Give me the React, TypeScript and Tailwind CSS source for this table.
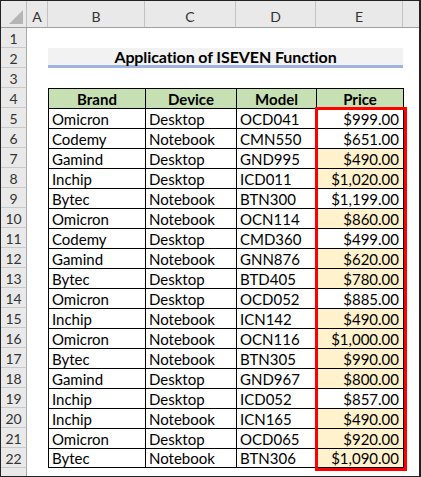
import React from "react";

const rows: [string, string, string, string, boolean][] = [
  ["Omicron", "Desktop", "OCD041", "$999.00", false],
  ["Codemy", "Notebook", "CMN550", "$651.00", false],
  ["Gamind", "Desktop", "GND995", "$490.00", true],
  ["Inchip", "Desktop", "ICD011", "$1,020.00", true],
  ["Bytec", "Notebook", "BTN300", "$1,199.00", false],
  ["Omicron", "Notebook", "OCN114", "$860.00", true],
  ["Codemy", "Desktop", "CMD360", "$499.00", false],
  ["Gamind", "Notebook", "GNN876", "$620.00", true],
  ["Bytec", "Desktop", "BTD405", "$780.00", true],
  ["Omicron", "Desktop", "OCD052", "$885.00", false],
  ["Inchip", "Notebook", "ICN142", "$490.00", true],
  ["Omicron", "Notebook", "OCN116", "$1,000.00", true],
  ["Bytec", "Notebook", "BTN305", "$990.00", true],
  ["Gamind", "Desktop", "GND967", "$800.00", true],
  ["Inchip", "Desktop", "ICD052", "$857.00", false],
  ["Inchip", "Notebook", "ICN165", "$490.00", true],
  ["Omicron", "Desktop", "OCD065", "$920.00", true],
  ["Bytec", "Notebook", "BTN306", "$1,090.00", true],
];

function RowHead({ n, last }: { n?: number; last?: boolean }) {
  return (
    <div
      className={`w-[26px] shrink-0 h-full bg-[#e9e9e9] border-r border-r-[#a8a8a8] ${
        last ? "" : "border-b border-b-[#c9c9c9]"
      } flex items-center justify-center pt-[2px] text-[14px] text-[#333]`}
    >
      {n}
    </div>
  );
}

export default function App() {
  return (
    <div
      className="relative w-[421px] h-[477px] overflow-hidden bg-white border border-[#222] border-r-2 text-black"
      style={{ fontFamily: "Lato, 'Liberation Sans', sans-serif" }}
    >
      {/* column header */}
      <div className="flex h-[27px] bg-[#e9e9e9] border-b border-b-[#9e9e9e] text-[14px] text-[#333]">
        <div className="w-[26px] shrink-0 border-r border-r-[#bdbdbd] relative">
          <svg className="absolute right-[3px] bottom-[3px]" width="14" height="14" viewBox="0 0 14 14">
            <polygon points="14,0 14,14 0,14" fill="#b5b5b5" />
          </svg>
        </div>
        <div className="w-[21px] shrink-0 border-r border-r-[#c3c3c3] flex items-center justify-center pt-[5px]">A</div>
        <div className="w-[97px] shrink-0 border-r border-r-[#c3c3c3] flex items-center justify-center pt-[5px]">B</div>
        <div className="w-[91px] shrink-0 border-r border-r-[#c3c3c3] flex items-center justify-center pt-[5px]">C</div>
        <div className="w-[80px] shrink-0 border-r border-r-[#c3c3c3] flex items-center justify-center pt-[5px]">D</div>
        <div className="w-[87px] shrink-0 border-r border-r-[#c3c3c3] flex items-center justify-center pt-[5px]">E</div>
        <div className="flex-1" />
      </div>

      {/* row 1 */}
      <div className="flex h-[20px]">
        <RowHead n={1} />
      </div>
      {/* row 2 title */}
      <div className="flex h-[20px]">
        <RowHead n={2} />
        <div className="w-[21px] shrink-0" />
        <div className="w-[355px] shrink-0 h-full bg-[#f2f2f2] border-b-[3px] border-b-[#9fb4de] flex items-center justify-center text-[16px] font-bold pt-[1px] tracking-[-0.1px]">
          Application of ISEVEN Function
        </div>
      </div>
      {/* row 3 */}
      <div className="flex h-[20px]">
        <RowHead n={3} />
      </div>
      {/* row 4 header */}
      <div className="flex h-[20px]">
        <RowHead n={4} />
        <div className="w-[21px] shrink-0" />
        {["Brand", "Device", "Model", "Price"].map((h, i) => (
          <div
            key={h}
            className={`${
              ["w-[97px]", "w-[91px]", "w-[80px]", "w-[88px]"][i]
            } shrink-0 h-full bg-[#c6e0b4] border-l border-t border-black ${
              i === 3 ? "border-r" : ""
            } flex items-center justify-center text-[15px] font-bold pt-[1px]`}
          >
            {h}
          </div>
        ))}
      </div>
      {rows.map((r, idx) => {
        const last = idx === rows.length - 1;
        return (
          <div key={idx} className="flex h-[20px]">
            <RowHead n={idx + 5} />
            <div className="w-[21px] shrink-0" />
            <div className={`w-[97px] shrink-0 h-full border-l border-t border-black ${last ? "border-b h-[21px]" : ""} flex items-center pl-[3px] text-[15px] pt-[1px]`}>
              {r[0]}
            </div>
            <div className={`w-[91px] shrink-0 h-full border-l border-t border-black ${last ? "border-b h-[21px]" : ""} flex items-center pl-[3px] text-[15px] pt-[1px]`}>
              {r[1]}
            </div>
            <div className={`w-[80px] shrink-0 h-full border-l border-t border-black ${last ? "border-b h-[21px]" : ""} flex items-center pl-[3px] text-[15px] pt-[1px]`}>
              {r[2]}
            </div>
            <div
              className={`w-[88px] shrink-0 h-full border-l border-t border-r border-black ${last ? "border-b h-[21px]" : ""} ${
                r[4] ? "bg-[#fff2cc]" : "bg-white"
              } flex items-center justify-end pr-[4px] text-[15px] pt-[1px]`}
            >
              {r[3]}
            </div>
          </div>
        );
      })}
      <div className="flex h-[20px]">
        <RowHead last />
      </div>

      {/* red selection outline over E5:E22 */}
      <div className="absolute left-[314px] top-[106px] w-[92px] h-[364px] border-[3px] border-[#ff0000] pointer-events-none" />
    </div>
  );
}
